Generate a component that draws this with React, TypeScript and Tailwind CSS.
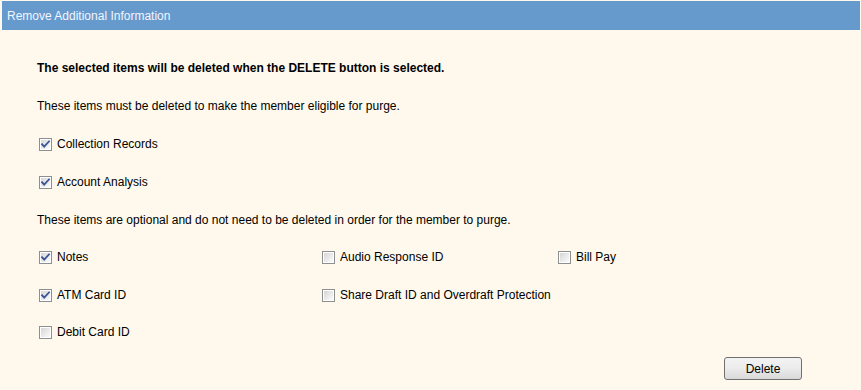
import React from "react";

function Box({ checked }: { checked: boolean }) {
  return (
    <svg width="13" height="13" viewBox="0 0 13 13" className="shrink-0">
      <defs>
        <linearGradient id="cbg" x1="0" y1="0" x2="1" y2="1">
          <stop offset="0" stopColor="#d6d6d6" />
          <stop offset="1" stopColor="#fbfbfb" />
        </linearGradient>
      </defs>
      <rect x="0.5" y="0.5" width="12" height="12" fill="#ffffff" stroke="#8e8f8f" />
      <rect x="2" y="2" width="9" height="9" fill="url(#cbg)" />
      {checked && (
        <path d="M3 6.2 L5.2 8.6 L10 3.4" fill="none" stroke="#3c5595" strokeWidth="1.8" strokeLinecap="square" />
      )}
    </svg>
  );
}

function Check({ label, checked }: { label: string; checked: boolean }) {
  return (
    <div className="flex items-center">
      <div className="ml-[2px]">
        <Box checked={checked} />
      </div>
      <span className="ml-[5px]">{label}</span>
    </div>
  );
}

export default function App() {
  return (
    <div
      className="w-[861px] h-[390px] bg-[#fff9ed] text-black text-[12px] overflow-hidden"
      style={{ fontFamily: '"Liberation Sans", Arial, sans-serif' }}
    >
      <div className="pt-[1px] pl-[2px] pr-[1px]">
        <div className="h-[29px] bg-[#6699cc] text-[#f2f6ff] flex items-center pl-[5px]">
          Remove Additional Information
        </div>
      </div>
      <div className="pl-[37px] pt-[19px]">
        <div className="h-[38px] flex items-center font-bold">
          The selected items will be deleted when the DELETE button is selected.
        </div>
        <div className="h-[38px] flex items-center">
          These items must be deleted to make the member eligible for purge.
        </div>
        <div className="h-[38px] flex items-center">
          <Check label="Collection Records" checked />
        </div>
        <div className="h-[38px] flex items-center">
          <Check label="Account Analysis" checked />
        </div>
        <div className="h-[37px] flex items-center">
          These items are optional and do not need to be deleted in order for the member to purge.
        </div>
        <div className="h-[38px] grid grid-cols-[283px_236px_1fr] items-center">
          <Check label="Notes" checked />
          <Check label="Audio Response ID" checked={false} />
          <Check label="Bill Pay" checked={false} />
        </div>
        <div className="h-[38px] grid grid-cols-[283px_236px_1fr] items-center">
          <Check label="ATM Card ID" checked />
          <Check label="Share Draft ID and Overdraft Protection" checked={false} />
        </div>
        <div className="h-[36px] flex items-center">
          <Check label="Debit Card ID" checked={false} />
        </div>
        <div className="flex justify-end pr-[59px] pt-[7px]">
          <button className="w-[78px] h-[23px] rounded-[3px] border border-[#707070] bg-gradient-to-b from-[#f3f3f3] via-[#ebebeb] to-[#d9d9d9] text-[12px] text-black flex items-center justify-center">
            Delete
          </button>
        </div>
      </div>
    </div>
  );
}
